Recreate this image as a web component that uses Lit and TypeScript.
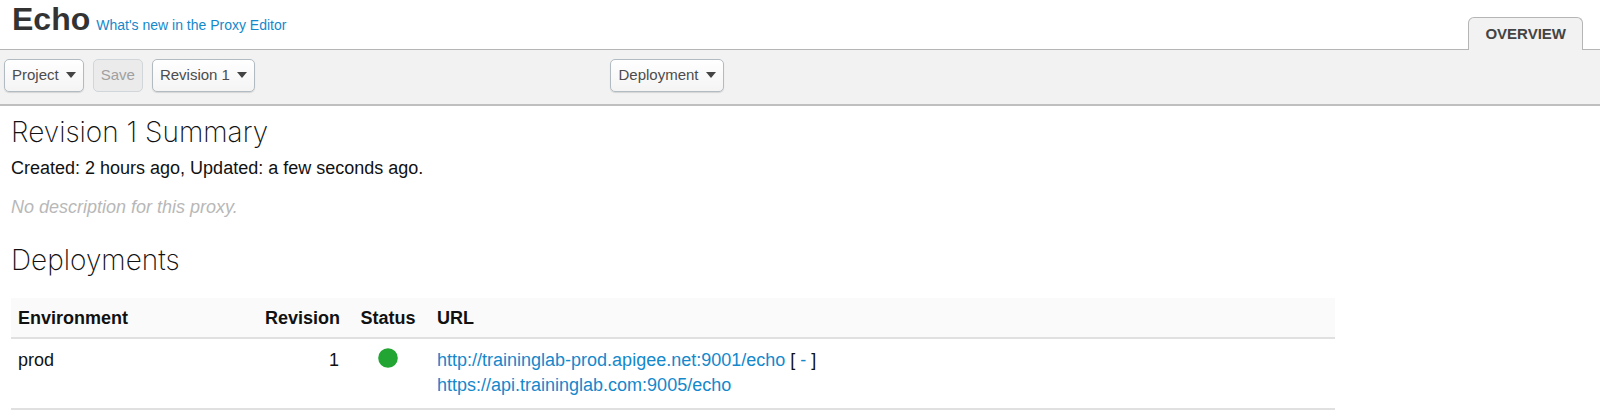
import { LitElement, html, css } from "lit";
import { customElement, property } from "lit/decorators.js";

@customElement("toolbar-button")
class ToolbarButton extends LitElement {
  @property() label = "";
  @property({ type: Boolean }) menu = false;
  @property({ type: Boolean }) disabled = false;

  static styles = css`
    :host { display: block; }
    button {
      display: flex;
      align-items: center;
      gap: 7px;
      box-sizing: border-box;
      height: 33px;
      padding: 0 7px 1px;
      border: 1px solid #b1bbc1;
      border-radius: 5px;
      background: linear-gradient(#ffffff, #f4f4f4);
      box-shadow: 0 1px 1px rgba(0, 0, 0, 0.12);
      color: #4c4c4c;
      font: 15px/20px "Liberation Sans", Arial, sans-serif;
      white-space: nowrap;
    }
    button:disabled {
      border-color: #d0d6d9;
      background: #ebebeb;
      color: #a0a0a0;
      box-shadow: none;
    }
    svg { display: block; fill: #444; }
  `;

  render() {
    return html`<button type="button" ?disabled=${this.disabled}>
      ${this.label}
      ${this.menu
        ? html`<svg width="10" height="6" viewBox="0 0 10 6" aria-hidden="true"><path d="M0 0h10L5 6z" /></svg>`
        : null}
    </button>`;
  }
}

@customElement("app-root")
class AppRoot extends LitElement {
  static styles = css`
    :host {
      display: block;
      background: #fff;
      color: #111;
      font: 18px/25px "Liberation Sans", Arial, sans-serif;
    }
    a { color: #1488cb; text-decoration: none; }
    header {
      display: flex;
      justify-content: space-between;
      align-items: flex-end;
      height: 49px;
      padding: 0 17px 0 12px;
      border-bottom: 1px solid #b5b5b5;
    }
    .title { display: flex; align-items: baseline; gap: 6px; padding-bottom: 10px; }
    h1 { margin: 0; color: #333; font: 600 32px/40px "Liberation Sans", Arial, sans-serif; }
    .news { font-size: 14px; line-height: 20px; }
    .tab {
      box-sizing: border-box;
      height: 33px;
      margin-bottom: -1px;
      padding: 0 16px;
      border: 1px solid #b5b5b5;
      border-bottom: 0;
      border-radius: 6px 6px 0 0;
      background: #f2f2f2;
      color: #444;
      font-size: 15px;
      line-height: 31px;
      font-weight: 600;
    }
    .toolbar {
      display: grid;
      grid-template-columns: 19fr 31fr;
      padding: 9px 0 12px 4px;
      border-bottom: 2px solid #bfbfbf;
      background: #f2f2f2;
    }
    .group { display: flex; gap: 9px; }
    main { padding: 6px 0 0 11px; }
    h2 { margin: 0; color: #111; font: 200 28px/40px Inter, "Liberation Sans", sans-serif; }
    p { margin: 0; }
    .meta { margin: 4px 0 14px; }
    .description { margin-bottom: 20px; color: #b8b8b8; font-style: italic; }
    .layout { display: grid; grid-template-columns: 5fr 1fr; margin-top: 18px; }
    table { width: 100%; border-collapse: collapse; table-layout: fixed; }
    th, td { padding: 8px 7px 6px; text-align: left; vertical-align: top; border-bottom: 2px solid #e0e0e0; }
    th { background: #fafafa; }
    .environment { width: 233px; }
    .revision { width: 74px; text-align: right; }
    .status { width: 70px; text-align: center; }
    td { padding: 9px 7px 10px; }
    .dot { display: block; margin: 0 auto; }
  `;

  render() {
    return html`
      <header>
        <div class="title">
          <h1>Echo</h1>
          <a class="news" href="#">What's new in the Proxy Editor</a>
        </div>
        <a class="tab" href="#">OVERVIEW</a>
      </header>
      <div class="toolbar">
        <div class="group">
          <toolbar-button label="Project" menu></toolbar-button>
          <toolbar-button label="Save" disabled></toolbar-button>
          <toolbar-button label="Revision 1" menu></toolbar-button>
        </div>
        <div class="group">
          <toolbar-button label="Deployment" menu></toolbar-button>
        </div>
      </div>
      <main>
        <h2>Revision 1 Summary</h2>
        <p class="meta">Created: 2 hours ago, Updated: a few seconds ago.</p>
        <p class="description">No description for this proxy.</p>
        <h2>Deployments</h2>
        <div class="layout">
          <table>
            <thead>
              <tr>
                <th class="environment">Environment</th>
                <th class="revision">Revision</th>
                <th class="status">Status</th>
                <th>URL</th>
              </tr>
            </thead>
            <tbody>
              <tr>
                <td>prod</td>
                <td class="revision">1</td>
                <td class="status">
                  <svg class="dot" width="20" height="20" viewBox="0 0 20 20" role="img" aria-label="Deployed">
                    <circle cx="10" cy="10" r="9.8" fill="#22a532" />
                  </svg>
                </td>
                <td>
                  <a href="#">http://traininglab-prod.apigee.net:9001/echo</a> [ <a href="#">-</a> ]<br />
                  <a href="#">https://api.traininglab.com:9005/echo</a>
                </td>
              </tr>
            </tbody>
          </table>
        </div>
      </main>
    `;
  }
}
